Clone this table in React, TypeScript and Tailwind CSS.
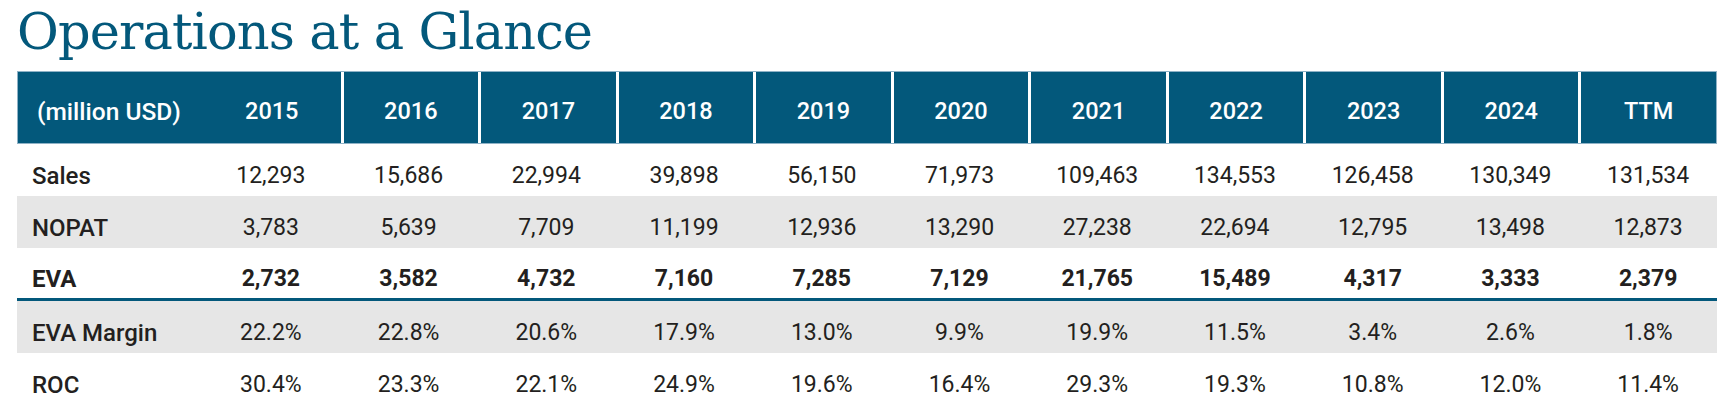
const years = ["2015", "2016", "2017", "2018", "2019", "2020", "2021", "2022", "2023", "2024", "TTM"];

type Row = { label: string; values: string[]; shade?: boolean; bold?: boolean; divider?: boolean };

const rows: Row[] = [
  { label: "Sales", values: ["12,293", "15,686", "22,994", "39,898", "56,150", "71,973", "109,463", "134,553", "126,458", "130,349", "131,534"] },
  { label: "NOPAT", shade: true, values: ["3,783", "5,639", "7,709", "11,199", "12,936", "13,290", "27,238", "22,694", "12,795", "13,498", "12,873"] },
  { label: "EVA", bold: true, divider: true, values: ["2,732", "3,582", "4,732", "7,160", "7,285", "7,129", "21,765", "15,489", "4,317", "3,333", "2,379"] },
  { label: "EVA Margin", shade: true, values: ["22.2%", "22.8%", "20.6%", "17.9%", "13.0%", "9.9%", "19.9%", "11.5%", "3.4%", "2.6%", "1.8%"] },
  { label: "ROC", values: ["30.4%", "23.3%", "22.1%", "24.9%", "19.6%", "16.4%", "29.3%", "19.3%", "10.8%", "12.0%", "11.4%"] },
];

export default function App() {
  return (
    <div className="min-h-[412px] bg-white px-[17px] pt-[6px] font-['Roboto',sans-serif] text-[#231f20]">
      <h1 className="font-['DejaVu_Serif',serif] text-[51px] leading-[51px] tracking-[-0.9px] text-[#03587b]">
        Operations at a Glance
      </h1>

      <div className="mt-[14px] w-[1700px]">
        {/* Header */}
        <div className="grid h-[73px] grid-cols-[185px_repeat(11,minmax(0,1fr))] border border-[#8fb2c6] bg-[#03587b] text-[23.5px] font-medium text-white">
          <div className="flex items-center pl-[19px] pt-[9px] text-[24.5px]">(million USD)</div>
          {years.map((y, i) => (
            <div
              key={y}
              className={`flex items-center justify-center pt-[9px] ${i > 0 ? "border-l-[3px] border-white" : ""}`}
            >
              {y}
            </div>
          ))}
        </div>

        {/* Body */}
        {rows.map((r) => (
          <div
            key={r.label}
            className={`grid grid-cols-[185px_repeat(11,minmax(0,1fr))] text-[23px] ${
              r.divider ? "h-[53px] border-b-[3px] border-[#03587b]" : "h-[52px]"
            } ${r.shade ? "bg-[#e6e6e6]" : "bg-white"} ${r.bold ? "font-bold" : ""}`}
          >
            <div className={`flex items-center pl-[15px] pt-[12px] text-[24px] ${r.bold ? "" : "font-medium"}`}>
              {r.label}
            </div>
            {r.values.map((v, i) => (
              <div key={i} className="flex items-center justify-center pt-[12px]">
                {v}
              </div>
            ))}
          </div>
        ))}
      </div>
    </div>
  );
}
